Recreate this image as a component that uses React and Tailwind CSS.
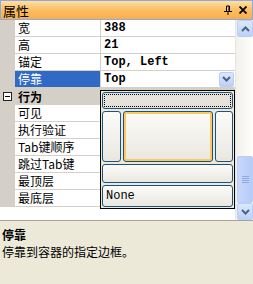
import React from 'react';

const rows = [
  { name: '宽', value: '388' },
  { name: '高', value: '21' },
  { name: '锚定', value: 'Top, Left' },
  { name: '停靠', value: 'Top', selected: true },
  { category: '行为' },
  { name: '可见' },
  { name: '执行验证' },
  { name: 'Tab键顺序' },
  { name: '跳过Tab键' },
  { name: '最顶层' },
  { name: '最底层' },
];

const cjk = "font-['Noto_Sans_CJK_SC',sans-serif]";
const mono = "font-['Liberation_Mono','Noto_Sans_CJK_SC',monospace]";

const Chevron = ({ up }) => (
  <svg width="9" height="6" viewBox="0 0 9 6">
    <path
      d={up ? 'M1 5 L4.5 1.5 L8 5' : 'M1 1 L4.5 4.5 L8 1'}
      fill="none"
      stroke="#4d6185"
      strokeWidth="2"
    />
  </svg>
);

const ScrollBtn = ({ up }) => (
  <div className="h-[17px] w-[16px] flex items-center justify-center rounded-[2px] border border-[#b8cff9] bg-gradient-to-b from-[#dde8fe] to-[#bcd0f8]">
    <Chevron up={up} />
  </div>
);

const XpBtn = ({ className = '', children }) => (
  <div className={`rounded-[3px] border border-[#1c5180] bg-gradient-to-b from-[#fbfbf9] to-[#e9e7df] ${className}`}>
    {children}
  </div>
);

export default function App() {
  return (
    <div className="w-[253px] h-[284px] bg-[#ece9d8] flex flex-col overflow-hidden">
      {/* title */}
      <div className="h-[20px] flex items-center border border-[#8fa9dd] bg-gradient-to-b from-[#fedfa6] via-[#fbbd62] to-[#f8ae4a]">
        <span className={`${cjk} text-[13px] leading-none text-black pl-[2px]`}>属性</span>
        <div className="ml-auto flex items-center gap-[7px] pr-[5px]">
          <svg width="8" height="10" viewBox="0 0 8 10">
            <path d="M2.5 1 H5.5 V6 M2.5 1 V6 M5 1 V6" fill="none" stroke="#000" strokeWidth="1" />
            <path d="M0 6.5 H8 M4 6.5 V10" fill="none" stroke="#000" strokeWidth="1" />
          </svg>
          <svg width="8" height="8" viewBox="0 0 8 8">
            <path d="M0.5 0.5 L7.5 7.5 M7.5 0.5 L0.5 7.5" stroke="#000" strokeWidth="1.8" />
          </svg>
        </div>
      </div>

      {/* grid */}
      <div className="relative h-[201px] flex bg-white border-b border-[#a5a39a]">
        <div className="flex-1 flex flex-col">
          {rows.map((r, i) =>
            r.category ? (
              <div key={i} className="h-[17px] flex bg-[#d4d0c8]">
                <div className="w-[15px] flex items-center justify-center">
                  <div className="w-[9px] h-[9px] border border-[#222] bg-white flex items-center justify-center">
                    <div className="w-[5px] h-[1px] bg-black" />
                  </div>
                </div>
                <span className={`${cjk} text-[12px] font-bold leading-[17px] pl-[3px]`}>{r.category}</span>
              </div>
            ) : (
              <div key={i} className="h-[17px] flex">
                <div className="w-[15px] bg-[#d4d0c8]" />
                <div
                  className={`w-[86px] border-b border-r border-[#d4d0c8] pl-[3px] ${cjk} text-[12px] leading-[16px] ${
                    r.selected ? 'bg-[#316ac5] text-white' : 'text-black'
                  }`}
                >
                  {r.name}
                </div>
                <div className={`flex-1 flex items-center border-b border-[#d4d0c8] pl-[3px] ${mono} text-[12px] font-bold leading-[16px] text-black`}>
                  {r.value}
                  {r.selected && (
                    <div className="ml-auto mr-[1px] w-[15px] h-[15px] flex items-center justify-center rounded-[2px] border border-[#b8cff9] bg-gradient-to-b from-[#dde8fe] to-[#bcd0f8]">
                      <Chevron />
                    </div>
                  )}
                </div>
              </div>
            )
          )}
        </div>

        {/* scrollbar */}
        <div className="w-[18px] flex flex-col items-end bg-gradient-to-r from-[#f3f1ec] to-[#fefefb] border-l border-[#e8e6de]">
          <ScrollBtn up />
          <div className="h-[119px]" />
          <div className="h-[47px] w-[16px] flex flex-col items-center justify-center gap-[1px] rounded-[2px] border border-[#b8cff9] bg-gradient-to-r from-[#c9d8fc] to-[#b5cbf7]">
            <div className="w-[7px] h-[1px] bg-[#8caae6]" />
            <div className="w-[7px] h-[1px] bg-[#8caae6]" />
            <div className="w-[7px] h-[1px] bg-[#8caae6]" />
            <div className="w-[7px] h-[1px] bg-[#8caae6]" />
          </div>
          <ScrollBtn />
        </div>

        {/* dock picker dropdown */}
        <div className="absolute left-[100px] top-[70px] w-[135px] h-[119px] border border-black bg-[#ece9d8] p-[1px] flex flex-col gap-[2px]">
          <XpBtn className="h-[17px] p-[1px] bg-none bg-[#e4e2da]">
            <div className="h-full border border-dotted border-black" />
          </XpBtn>
          <div className="h-[51px] flex gap-[2px]">
            <XpBtn className="w-[19px]" />
            <XpBtn className="flex-1 shadow-[inset_0_0_0_2px_#fbc862]" />
            <XpBtn className="w-[18px]" />
          </div>
          <XpBtn className="h-[19px]" />
          <XpBtn className={`flex-1 flex items-center pl-[3px] ${mono} text-[12px] leading-none text-black`}>
            None
          </XpBtn>
        </div>
      </div>

      {/* description */}
      <div className={`flex-1 pt-[5px] pl-[2px] ${cjk} text-[12px] leading-[17px] text-black`}>
        <div className="font-bold">停靠</div>
        <div>停靠到容器的指定边框。</div>
      </div>
    </div>
  );
}
